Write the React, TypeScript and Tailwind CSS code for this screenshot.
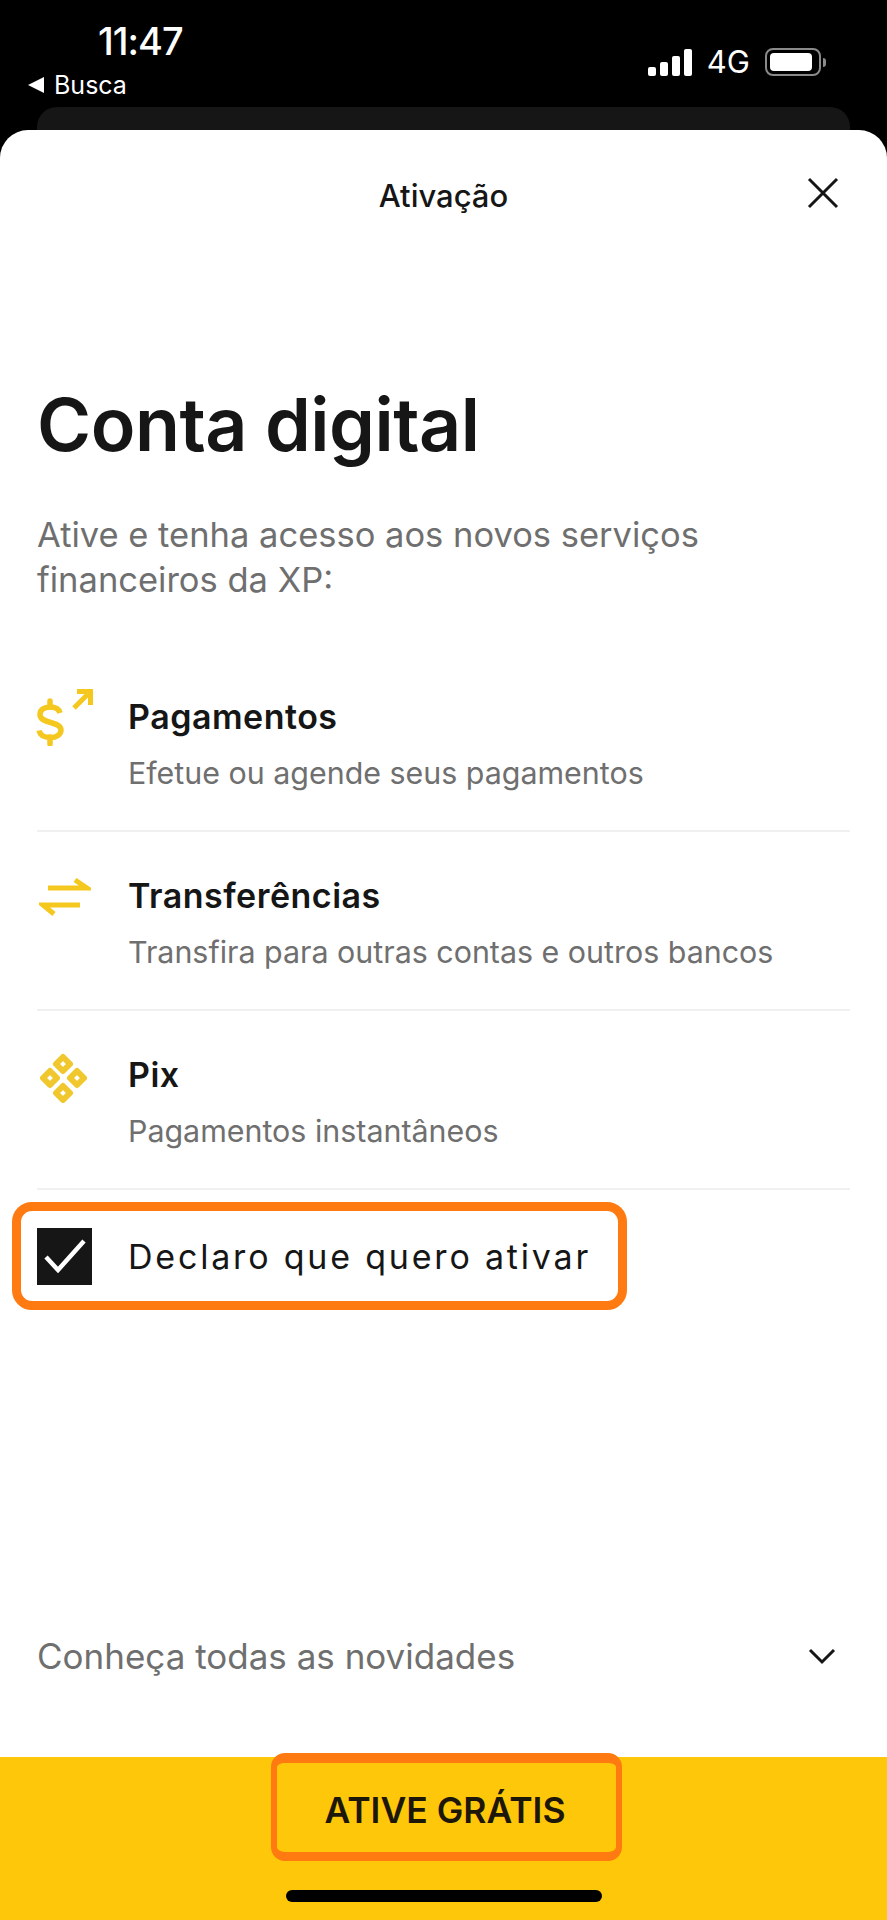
import React from 'react';

const FONT = "font-['Inter','Liberation_Sans',sans-serif]";

const DollarIcon = () => (
  <svg width="60" height="60" viewBox="0 0 60 60" fill="none" stroke="#f5c820" strokeWidth="5.500">
    <path d="M25 27c-1-4-5-6-10-6-6 0-10 3-10 7.500 0 10 21 6 21 15.500 0 4.500-4.500 7.500-10.500 7.500-6 0-10.500-2.500-11.500-7" />
    <path d="M15 15v6M15 51v7" strokeLinecap="round" />
    <path d="M39 22l15-15M42 5.500h13.500V19" strokeWidth="5" />
  </svg>
);

const TransferIcon = () => (
  <svg width="52" height="40" viewBox="0 0 52 40" fill="none" stroke="#f5c820" strokeWidth="5">
    <path d="M9 10h39L36 2" />
    <path d="M41 27H4l11 9" />
  </svg>
);

const PixIcon = () => (
  <svg width="52" height="52" viewBox="0 0 52 52" fill="none" stroke="#f0c72c" strokeWidth="6" strokeLinejoin="round">
    <path d="M24 6l7 7-7 7-7-7z" />
    <path d="M24 35l7 7-7 7-7-7z" />
    <path d="M11 20l7 7-7 7-7-7z" />
    <path d="M38 20l7 7-7 7-7-7z" />
  </svg>
);

const items = [
  { title: 'Pagamentos', text: 'Efetue ou agende seus pagamentos', icon: <DollarIcon />, iconClass: '-mt-[13px] -ml-[2px]' },
  { title: 'Transferências', text: 'Transfira para outras contas e outros bancos', icon: <TransferIcon />, iconClass: 'ml-[2px]' },
  { title: 'Pix', text: 'Pagamentos instantâneos', icon: <PixIcon />, iconClass: 'ml-[2px] -mt-[6px]' },
];

const StatusBar = () => (
  <div className="relative h-[130px] bg-black text-white">
    <div className="flex justify-between">
      <div className="flex flex-col">
        <div className="pl-[98px] pt-[18px] text-[38px] leading-[46px] font-medium tracking-[-1px]">11:47</div>
        <div className="flex items-center gap-[10px] pl-[28px] pt-[6px] text-[25px] leading-[30px]">
          <span className="w-0 h-0 border-y-[8px] border-y-transparent border-r-[16px] border-r-white" />
          <span>Busca</span>
        </div>
      </div>
      <div className="flex items-center gap-[15px] pr-[61px] pt-[46px] h-fit">
        <div className="flex items-end gap-[4px] h-[27px]">
          <span className="w-[8px] h-[9px] rounded-[2px] bg-white" />
          <span className="w-[8px] h-[14px] rounded-[2px] bg-white" />
          <span className="w-[8px] h-[20px] rounded-[2px] bg-white" />
          <span className="w-[8px] h-[27px] rounded-[2px] bg-white" />
        </div>
        <span className="text-[31px] leading-[32px]">4G</span>
        <div className="flex items-center gap-[2px]">
          <div className="w-[56px] h-[28px] rounded-[8px] border-2 border-[#8a8a8a] p-[3px]">
            <div className="w-[42px] h-full rounded-[4px] bg-white" />
          </div>
          <span className="w-[3px] h-[9px] rounded-r-full bg-[#8a8a8a]" />
        </div>
      </div>
    </div>
    <div className="absolute left-[37px] right-[37px] bottom-0 h-[23px] rounded-t-[20px] bg-[#161616]" />
  </div>
);

export default function App() {
  return (
    <div className={`flex flex-col h-[1920px] w-full bg-black overflow-hidden ${FONT}`}>
      <StatusBar />

      <div className="flex flex-col flex-1 bg-white rounded-t-[28px]">
        <div className="relative flex items-center justify-center h-[133px] text-[#161616]">
          <span className="text-[31px] font-medium">Ativação</span>
          <svg className="absolute left-[806px] top-[46px]" width="34" height="34" viewBox="0 0 34 34" stroke="#161616" strokeWidth="3" fill="none">
            <path d="M3 3l28 28M31 3L3 31" />
          </svg>
        </div>

        <div className="px-[37px]">
          <h1 className="mt-[123px] text-[73.500px] leading-[78px] font-semibold tracking-[-0.5px] text-[#161616]">Conta digital</h1>
          <p className="mt-[48px] text-[34.500px] leading-[45px] text-[#6f6f6f]">
            Ative e tenha acesso aos novos serviços financeiros da XP:
          </p>

          <div className="mt-[51px]">
            {items.map(item => (
              <div key={item.title} className="flex h-[179px] pt-[46px] border-b-2 border-[#f0f0f0]">
                <div className="w-[91px] shrink-0">
                  <div className={item.iconClass}>{item.icon}</div>
                </div>
                <div>
                  <div className="text-[34px] leading-[36px] font-semibold text-[#161616] tracking-[0.5px]">{item.title}</div>
                  <div className="mt-[19px] text-[30.400px] leading-[38px] text-[#6f6f6f] whitespace-nowrap">{item.text}</div>
                </div>
              </div>
            ))}
          </div>
        </div>

        <div className="ml-[12px] mt-[12px] flex items-center w-[615px] h-[108px] pl-[16px] border-[9px] border-[#ff7a10] rounded-[20px]">
          <div className="flex items-center justify-center w-[55px] h-[57px] bg-[#161616]">
            <svg width="44" height="36" viewBox="0 0 44 36" fill="none" stroke="white" strokeWidth="4.500">
              <path d="M3 19l12 13L41 3" />
            </svg>
          </div>
          <span className="ml-[36px] text-[34px] tracking-[2.800px] text-[#161616] whitespace-nowrap">Declaro que quero ativar</span>
        </div>

        <div className="mt-auto mb-[79px] px-[37px] flex items-center justify-between">
          <span className="text-[35px] leading-[44px] text-[#6f6f6f]">Conheça todas as novidades</span>
          <svg className="mr-[14px]" width="28" height="18" viewBox="0 0 28 18" fill="none" stroke="#161616" strokeWidth="3">
            <path d="M2 3l12 12L26 3" />
          </svg>
        </div>
      </div>

      <div className="flex flex-col items-center h-[163px] bg-[#ffc709]">
        <div className="-mt-[4px] ml-[6px] flex items-center justify-center w-[351px] h-[108px] pt-[6px] pr-[3px] border-x-[6px] border-t-[10px] border-b-[9px] border-[#ff7a10] rounded-[14px]">
          <span className="text-[35.500px] font-semibold text-[#1c1708]">ATIVE GRÁTIS</span>
        </div>
        <div className="mt-[29px] w-[316px] h-[12px] rounded-full bg-black" />
      </div>
    </div>
  );
}
